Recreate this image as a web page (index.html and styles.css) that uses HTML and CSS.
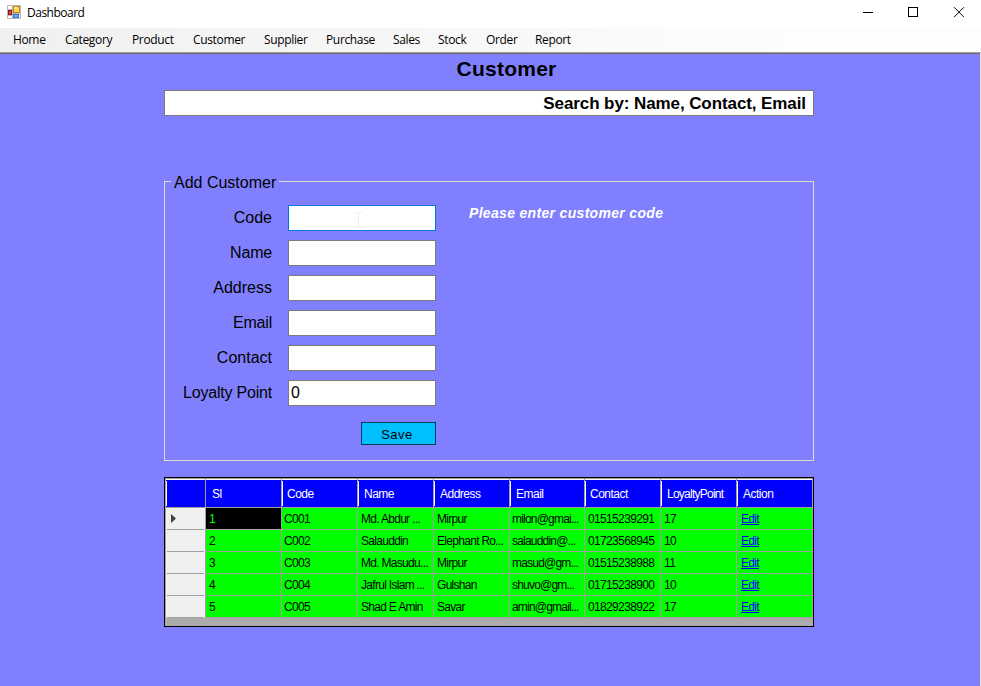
FILE: index.html
```html
<!DOCTYPE html>
<html lang="en">
<head>
<meta charset="utf-8">
<title>Dashboard</title>
<link rel="stylesheet" href="styles.css">
</head>
<body>
<header class="titlebar">
  <svg class="app-icon" width="14" height="14" viewBox="0 0 14 14" shape-rendering="crispEdges">
    <rect width="14" height="14" fill="#b9b9b9"/><rect x="1" y="1" width="4" height="3" fill="#fff"/><rect x="1" y="11" width="4" height="2" fill="#fff"/><rect x="12" y="9" width="1" height="4" fill="#fff"/>
    <rect x="6" y="1" width="7" height="7" fill="#c58a14"/><rect x="7" y="2" width="5" height="5" fill="#ffd34f"/><rect x="7" y="2" width="3" height="2" fill="#ffe994"/>
    <rect x="1" y="5" width="4" height="5" fill="#8f1616"/><rect x="2" y="6" width="2" height="3" fill="#e04b43"/>
    <rect x="6" y="9" width="6" height="4" fill="#3571d4"/><rect x="7" y="10" width="4" height="2" fill="#76a9f5"/>
  </svg>
  <span class="window-title">Dashboard</span>
  <svg class="controls" width="106" height="12" viewBox="0 0 106 12" fill="none" stroke="#000">
    <path d="M0 5.5h10M45.500 .5h9v9h-9z" shape-rendering="crispEdges"/><path d="M91 .2l10 10M101 .2l-10 10"/>
  </svg>
</header>
<nav class="menu">
  <span>Home</span><span>Category</span><span>Product</span><span>Customer</span><span>Supplier</span><span>Purchase</span><span>Sales</span><span>Stock</span><span>Order</span><span>Report</span>
</nav>
<main class="workspace">
  <h1>Customer</h1>
  <div class="search"><span>Search by: Name, Contact, Email</span></div>
  <fieldset class="form">
    <legend>Add Customer</legend>
    <div class="fields">
      <label for="code">Code</label>
      <div class="code-box"><input id="code" class="focused"><svg class="ibeam" width="7" height="16" viewBox="0 0 7 16" fill="none" stroke="#eee" shape-rendering="crispEdges"><path d="M0 .5h3M4 .5h3M3.500 1v14M0 15.500h3M4 15.500h3"/></svg></div>
      <label class="l-name" for="name">Name</label><input id="name">
      <label for="address">Address</label><input id="address">
      <label class="l-name" for="email">Email</label><input id="email">
      <label for="contact">Contact</label><input id="contact">
      <label class="l-loyalty" for="loyalty">Loyalty Point</label><input id="loyalty" value="0">
      <button type="button"><span>Save</span></button>
    </div>
    <p class="message">Please enter customer code</p>
  </fieldset>
  <div class="grid-box">
    <table>
      <colgroup><col class="c-row"><col><col><col><col><col class="c-email"><col><col><col></colgroup>
      <thead><tr><th></th><th>Sl</th><th>Code</th><th>Name</th><th>Address</th><th>Email</th><th>Contact</th><th class="tight">LoyaltyPoint</th><th>Action</th></tr></thead>
      <tbody>
        <tr><th><svg width="5" height="9" viewBox="0 0 5 9"><path d="M0 0L5 4.500L0 9z" fill="#404040"/></svg></th><td class="selected">1</td><td class="num">C001</td><td>Md. Abdur ...</td><td>Mirpur</td><td>milon@gmai...</td><td class="num">01515239291</td><td class="num">17</td><td><a href="#">Edit</a></td></tr>
        <tr><th></th><td>2</td><td class="num">C002</td><td>Salauddin</td><td>Elephant Ro...</td><td>salauddin@...</td><td class="num">01723568945</td><td class="num">10</td><td><a href="#">Edit</a></td></tr>
        <tr><th></th><td>3</td><td class="num">C003</td><td>Md. Masudu...</td><td>Mirpur</td><td>masud@gm...</td><td class="num">01515238988</td><td class="num">11</td><td><a href="#">Edit</a></td></tr>
        <tr><th></th><td>4</td><td class="num">C004</td><td>Jafrul Islam ...</td><td>Gulshan</td><td>shuvo@gm...</td><td class="num">01715238900</td><td class="num">10</td><td><a href="#">Edit</a></td></tr>
        <tr><th></th><td>5</td><td class="num">C005</td><td>Shad E Amin</td><td>Savar</td><td>amin@gmail...</td><td class="num">01829238922</td><td class="num">17</td><td><a href="#">Edit</a></td></tr>
      </tbody>
    </table>
  </div>
</main>
</body>
</html>
```
FILE: styles.css
```css
* { box-sizing: border-box; }
body { margin: 0; width: 981px; height: 686px; overflow: hidden; display: flex; flex-direction: column; background: #fff; color: #000; font-family: "Liberation Sans", sans-serif; }
.titlebar { height: 28px; display: flex; align-items: flex-start; padding: 5px 12px 0 7px; font: 12px/16px "Open Sans", sans-serif; }
.window-title { margin-left: 6px; letter-spacing: -.5px; }
.controls { margin: 2px 0 0 auto; }
.menu { height: 24px; padding-left: 13px; display: grid; grid-template-columns: 52px 67px 61px 71px 62px 67px 45px 48px 49px 60px; font: 12px/24px "Open Sans", sans-serif; letter-spacing: -.35px; background: linear-gradient(90deg, #f0f0f0, #fdfdfd 80%); }
.workspace { flex: 1; background: #8080ff; border-top: 1px solid #a0a0a0; border-right: 1px solid #e3e3e3; box-shadow: inset 0 1px #696969; padding-left: 164px; }
h1 { margin: 3px 0 0; width: 685px; height: 27px; text-align: center; font-size: 21px; line-height: 26px; letter-spacing: .25px; }
.search { margin-top: 7px; width: 650px; height: 26px; border: 1px solid #7a7a7a; background: #fff; padding-right: 7px; text-align: right; font-weight: bold; font-size: 17px; line-height: 25px; letter-spacing: -.09px; }
.form { margin: 57px 0 0; width: 650px; height: 288px; border: 1px solid #dcdcdc; padding: 0; display: flex; align-items: flex-start; font-size: 16px; }
legend { margin-left: 6px; padding: 0 3px; height: 16px; line-height: 19px; }
.fields { display: grid; grid-template-columns: 107px 148px; column-gap: 16px; row-gap: 9px; padding-top: 16px; }
label { text-align: right; line-height: 25px; }
.l-name { letter-spacing: -.2px; }
.l-loyalty { letter-spacing: -.2px; }
input { display: block; width: 148px; height: 26px; border: 1px solid #7a7a7a; border-radius: 0; padding: 0 2px; background: #fff; outline: 0; font: 16px "Liberation Sans", sans-serif; }
.focused { border-color: #0078d7; }
.code-box { position: relative; }
.ibeam { position: absolute; left: 67px; top: 7px; }
button { grid-column: 2; justify-self: end; width: 75px; height: 23px; margin-top: 7px; padding: 1px 3px 0 0; border: 1px solid #003f5a; background: #00bfff; color: #000; font: 13px "Liberation Sans", sans-serif; letter-spacing: .5px; }
.message { margin: 15px 0 0 33px; color: #fff; font: italic bold 14px/18px "Liberation Sans", sans-serif; letter-spacing: .32px; }
.grid-box { margin-top: 16px; width: 650px; height: 150px; border: 1px solid #000; background: #ababab; }
table { width: 648px; border-spacing: 0; table-layout: fixed; font-size: 12px; letter-spacing: -.7px; line-height: 20px; }
col { width: 76px; }
.c-row { width: 41px; }
.c-email { width: 75px; }
th, td { padding: 0; text-align: left; font-weight: normal; white-space: nowrap; overflow: hidden; }
thead th { height: 30px; border-top: 1px solid #a0a0a0; border-bottom: 1px solid #a0a0a0; background: linear-gradient(#fff, #fff) 0 2px / 1px 25px no-repeat, #00f; box-shadow: inset 0 1px #fff; border-right: 1px solid #a0a0a0; color: #fff; padding: 1px 0 0 6px; letter-spacing: -.5px; }
thead th:first-child { border-left: 1px solid #a0a0a0; }
thead th:nth-child(2) { background: #00f; }
thead th:nth-child(3), thead th:nth-child(7) { padding-left: 5px; }
thead .tight { letter-spacing: -.75px; }
tbody td { height: 22px; background: #0f0; border-right: 1px solid #a0a0a0; border-bottom: 1px solid #a0a0a0; padding-left: 3px; }
tbody .num { letter-spacing: -.65px; }
tbody td:last-child { padding-left: 4px; }
tbody td:nth-child(3), tbody td:nth-child(6) { padding-left: 2px; }
tbody td:nth-child(6) { letter-spacing: -.8px; }
tbody th { height: 22px; padding-left: 5px; background: linear-gradient(#a0a0a0, #a0a0a0) 1px 100% / 37px 1px no-repeat, #f0f0f0; border-left: 1px solid #a0a0a0; border-right: 1px solid #a0a0a0; }
tbody th svg { display: block; margin-top: -1px; }
tbody .selected { background: #000; color: #0f0; }
a { color: #00f; }
```
